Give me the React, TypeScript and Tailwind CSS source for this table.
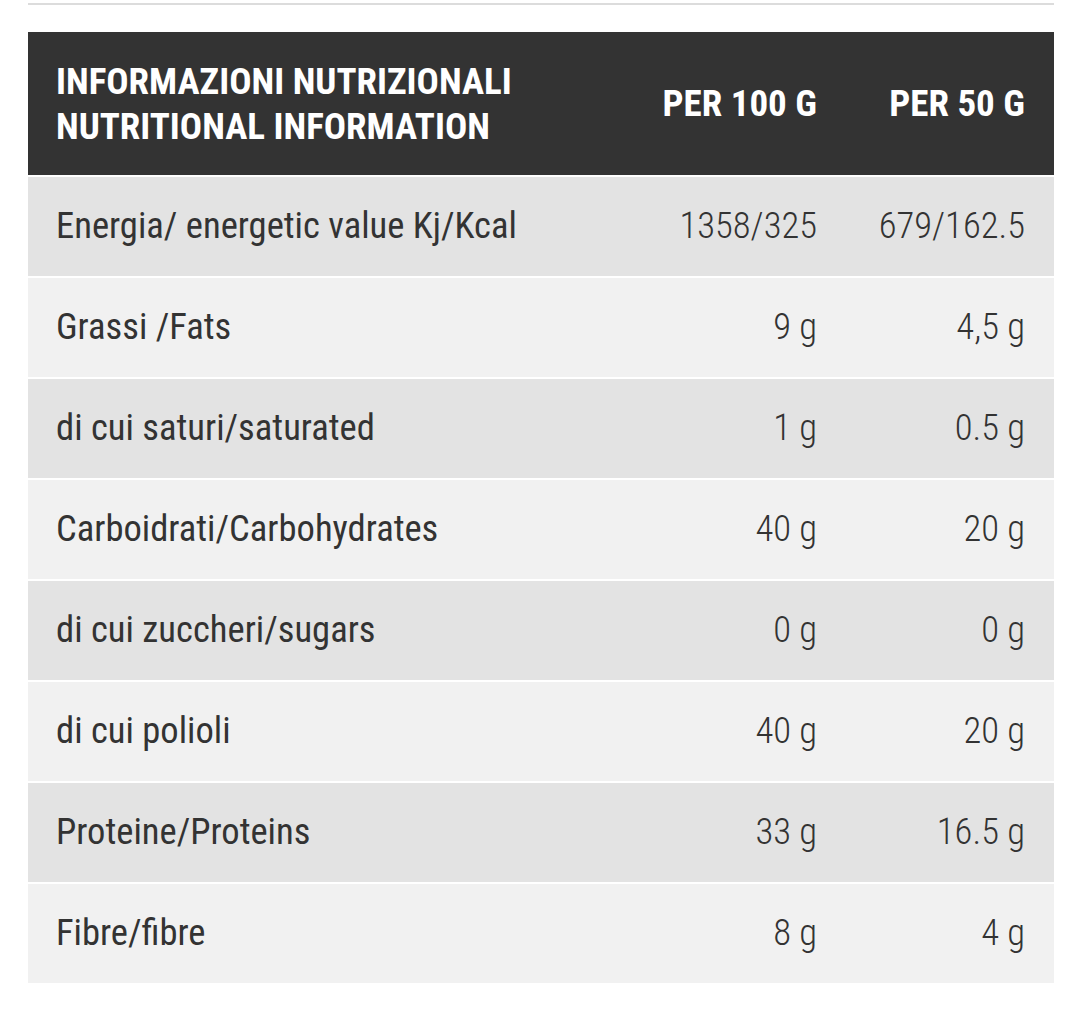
const rows = [
  { label: 'Energia/ energetic value Kj/Kcal', a: '1358/325', b: '679/162.5' },
  { label: 'Grassi /Fats', a: '9 g', b: '4,5 g' },
  { label: 'di cui saturi/saturated', a: '1 g', b: '0.5 g' },
  { label: 'Carboidrati/Carbohydrates', a: '40 g', b: '20 g' },
  { label: 'di cui zuccheri/sugars', a: '0 g', b: '0 g' },
  { label: 'di cui polioli', a: '40 g', b: '20 g' },
  { label: 'Proteine/Proteins', a: '33 g', b: '16.5 g' },
  { label: 'Fibre/fibre', a: '8 g', b: '4 g' },
]

export default function App() {
  return (
    <div className="min-h-[1021px] bg-white px-[28px] pt-[3px] font-['Roboto_Condensed',Roboto,sans-serif] text-[#333]">
      <div className="h-[2px] w-[1026px] bg-[#dcdcdc]" />

      <div className="mt-[27px] flex w-[1026px] flex-col gap-[2px]">
        {/* header */}
        <div className="grid h-[143px] grid-cols-[606px_211px_209px] items-center bg-[#333333] text-[37px] font-bold leading-[45px] text-white">
          <div className="pl-[28px]">
            INFORMAZIONI NUTRIZIONALI
            <br />
            NUTRITIONAL INFORMATION
          </div>
          <div className="pr-[28px] text-right">PER 100 G</div>
          <div className="pr-[29px] text-right">PER 50 G</div>
        </div>

        {rows.map((r, i) => (
          <div
            key={r.label}
            className={`grid h-[99px] grid-cols-[606px_211px_209px] items-center text-[36.6px] ${i % 2 === 0 ? 'bg-[#e3e3e3]' : 'bg-[#f1f1f1]'}`}
          >
            <div className="pl-[28px]">{r.label}</div>
            <div className="pr-[28px] text-right font-light">{r.a}</div>
            <div className="pr-[29px] text-right font-light">{r.b}</div>
          </div>
        ))}
      </div>
    </div>
  )
}
